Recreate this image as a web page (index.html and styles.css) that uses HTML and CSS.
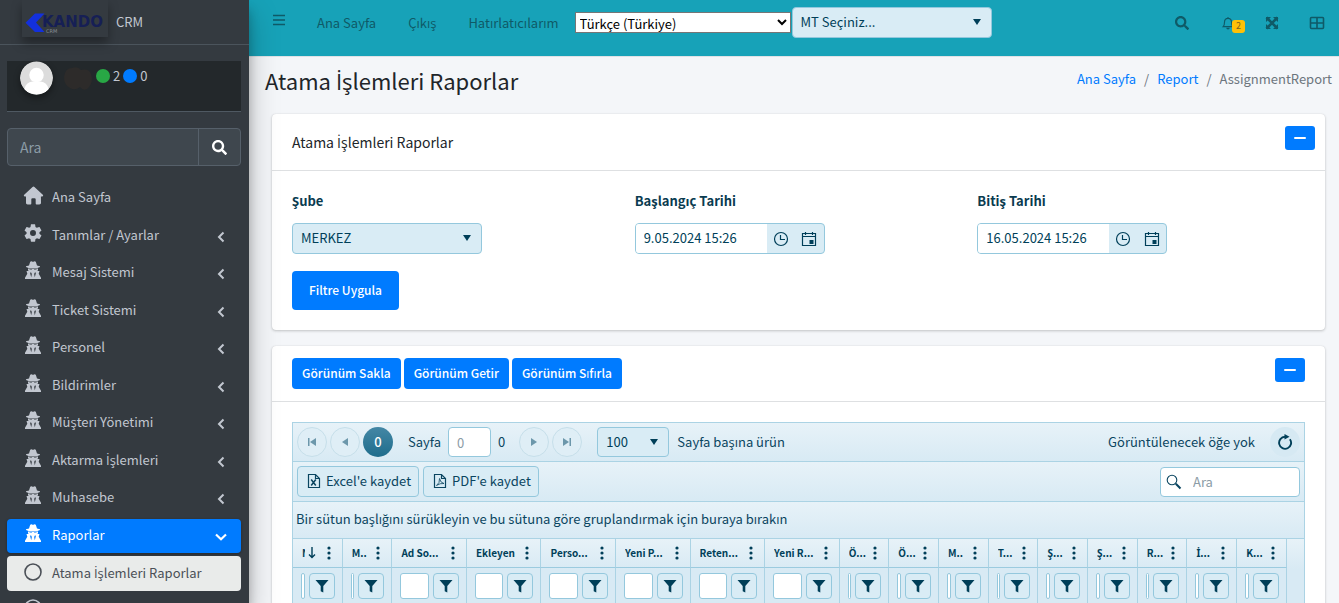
FILE: index.html
```html
<!DOCTYPE html>
<html lang="tr">
<head>
<meta charset="utf-8">
<title>Atama İşlemleri Raporlar</title>
<link rel="stylesheet" href="styles.css">
</head>
<body>
<svg class="sprite" aria-hidden="true">
  <symbol id="i-secret" viewBox="0 0 16 18"><path fill-rule="evenodd" d="M4 4.500L5.200.8Q6.500-.3 8 1 9.500-.3 10.800.8L12 4.500l3 .8v.7l-2.500 1h-9L1 6v-.700zM3 7.600h10V9l-.6 1h2.100l-.8 2.800 2.300 4V18H0v-1.200l2.300-4-.8-2.800h2.100L3 9zM4.500 8.200v.6h2.500v-.6zM9 8.200v.6h2.500v-.6zM5 11.500l1.200 4.700.6-3-.4-1.400zM11 11.500l-1.400.3-.4 1.400.6 3z"/></symbol>
  <symbol id="i-search" viewBox="0 0 512 512"><path d="M505 442.7L405.3 343c-4.5-4.5-10.6-7-17-7H372c27.6-35.3 44-79.7 44-128C416 93.1 322.9 0 208 0S0 93.1 0 208s93.1 208 208 208c48.3 0 92.7-16.4 128-44v16.3c0 6.4 2.5 12.5 7 17l99.7 99.7c9.4 9.4 24.6 9.4 33.9 0l28.3-28.3c9.4-9.4 9.4-24.6.1-34zM208 336c-70.7 0-128-57.2-128-128 0-70.7 57.2-128 128-128 70.7 0 128 57.2 128 128 0 70.7-57.2 128-128 128z"/></symbol>
  <symbol id="i-home" viewBox="0 0 22 20"><path d="M11 .6a1.400 1.400 0 0 1 1 .4l8.800 8.200c.7.7.4 1.800-.7 1.800h-1.300l.1 6.600c0 1.100-.7 1.800-1.800 1.800h-2.900a.9.9 0 0 1-.9-.9V14a1.200 1.200 0 0 0-1.200-1.200H9.900A1.200 1.200 0 0 0 8.700 14v4.500a.9.9 0 0 1-.9.9H4.900c-1.100 0-1.800-.7-1.800-1.800V11H1.900C.8 11 .5 9.900 1.200 9.200L10 1a1.400 1.400 0 0 1 1-.4z"/></symbol>
  <symbol id="i-cog" viewBox="2 2 20 20"><path d="M19.140 12.940c.04-.3.06-.61.06-.94 0-.32-.02-.64-.07-.94l2.030-1.580c.18-.14.23-.41.12-.61l-1.920-3.320c-.12-.22-.37-.29-.59-.22l-2.390.96c-.5-.38-1.030-.7-1.620-.94l-.36-2.540c-.04-.24-.24-.41-.48-.41h-3.840c-.24 0-.43.17-.47.41l-.36 2.540c-.59.24-1.130.57-1.620.94l-2.390-.96c-.22-.08-.47 0-.59.22L2.740 8.870c-.12.21-.08.47.12.61l2.030 1.580c-.05.3-.09.63-.09.94s.02.64.07.94l-2.030 1.580c-.18.14-.23.41-.12.61l1.920 3.320c.12.22.37.29.59.22l2.390-.96c.5.38 1.030.7 1.620.94l.36 2.540c.05.24.24.41.48.41h3.840c.24 0 .44-.17.47-.41l.36-2.540c.59-.24 1.130-.56 1.620-.94l2.390.96c.22.08.47 0 .59-.22l1.920-3.320c.12-.22.07-.47-.12-.61l-2.010-1.580zM12 15.300a3.300 3.300 0 1 1 0-6.600 3.300 3.300 0 0 1 0 6.600z"/></symbol>
  <symbol id="i-left" viewBox="0 0 8 12"><path d="M6.500 1.500L2 6l4.500 4.500" fill="none" stroke="currentColor" stroke-width="2"/></symbol>
  <symbol id="i-down" viewBox="0 0 12 8"><path d="M1 1.500l5 4.700 5-4.700" fill="none" stroke="currentColor" stroke-width="2.200"/></symbol>
  <symbol id="i-circle" viewBox="0 0 18 18"><circle cx="9" cy="9" r="8" fill="none" stroke="currentColor" stroke-width="1.600"/></symbol>
  <symbol id="i-caret" viewBox="0 0 8 6"><path d="M0 0h8L4 6z"/></symbol>
  <symbol id="i-clock" viewBox="0 0 16 16"><g fill="none" stroke="currentColor"><circle cx="8" cy="8" r="6.500" stroke-width="1.200"/><path d="M7.500 4v4.500H12" stroke-width="1.200"/></g></symbol>
  <symbol id="i-cal" viewBox="0 0 16 16"><path d="M1.500 2.500h13v12h-13zM1.500 5.500h13M4.500 1v3M11.500 1v3" fill="none" stroke="currentColor" stroke-width="1.200"/><path d="M8.500 9h4v4h-4z"/></symbol>
  <symbol id="i-dots" viewBox="0 0 4 14"><circle cx="2" cy="2" r="1.600"/><circle cx="2" cy="7" r="1.600"/><circle cx="2" cy="12" r="1.600"/></symbol>
  <symbol id="i-filter" viewBox="0 0 14 14"><path d="M.5 1h13L8.300 7v6.500l-2.600-1.300V7z"/></symbol>
  <symbol id="i-tri" viewBox="0 0 8 8"><path d="M1 0l6 4-6 4z"/></symbol>
  <symbol id="i-last" viewBox="0 0 8 8"><path d="M0 0l6 4-6 4zM6.500 0H8v8H6.500z"/></symbol>
</svg>

<div class="app">
  <aside class="sidebar">
    <a class="brand" href="#">
      <svg class="logo" viewBox="0 0 86 37" role="img" aria-label="Kando CRM">
        <path d="M13 13.500h9.500l-8.500 9 8.500 9.500H13L3.500 22.700z" fill="#1330dc"/>
        <text x="20" y="27" class="logo-name">KANDO</text>
        <text x="24" y="33" class="logo-sub">CRM</text>
      </svg>
      <span>CRM</span>
    </a>
    <div class="user">
      <svg class="avatar" viewBox="0 0 34 34"><circle cx="17" cy="17" r="17" fill="#dcdcdc"/><circle cx="17" cy="14" r="7.500" fill="#fff"/><path d="M4.500 28.500Q6 21 13 20.500h8Q28 21 29.500 28.500A17 17 0 0 1 4.500 28.500z" fill="#fff"/></svg>
      <svg class="smudge" viewBox="0 0 30 24"><path d="M1 11Q2 2 9 2q6-2 9 2 8-2 10 4 3 9-4 15-4 2-7-2-5 4-10 1Q1 19 1 11z" fill="#2d2b2a"/></svg>
      <span class="dot dot-green"></span><span>2</span>
      <span class="dot dot-blue"></span><span>0</span>
    </div>
    <form class="side-search">
      <input type="search" placeholder="Ara" aria-label="Menüde ara">
      <button type="button" aria-label="Ara"><svg><use href="#i-search"/></svg></button>
    </form>
    <ul class="menu">
      <li><a href="#"><svg class="wide"><use href="#i-home"/></svg><span>Ana Sayfa</span></a></li>
      <li><a href="#"><svg><use href="#i-cog"/></svg><span>Tanımlar / Ayarlar</span><svg class="arrow"><use href="#i-left"/></svg></a></li>
      <li><a href="#"><svg><use href="#i-secret"/></svg><span>Mesaj Sistemi</span><svg class="arrow"><use href="#i-left"/></svg></a></li>
      <li><a href="#"><svg><use href="#i-secret"/></svg><span>Ticket Sistemi</span><svg class="arrow"><use href="#i-left"/></svg></a></li>
      <li><a href="#"><svg><use href="#i-secret"/></svg><span>Personel</span><svg class="arrow"><use href="#i-left"/></svg></a></li>
      <li><a href="#"><svg><use href="#i-secret"/></svg><span>Bildirimler</span><svg class="arrow"><use href="#i-left"/></svg></a></li>
      <li><a href="#"><svg><use href="#i-secret"/></svg><span>Müşteri Yönetimi</span><svg class="arrow"><use href="#i-left"/></svg></a></li>
      <li><a href="#"><svg><use href="#i-secret"/></svg><span>Aktarma <b class="tr">İ</b>şlemleri</span><svg class="arrow"><use href="#i-left"/></svg></a></li>
      <li><a href="#"><svg><use href="#i-secret"/></svg><span>Muhasebe</span><svg class="arrow"><use href="#i-left"/></svg></a></li>
      <li><a class="active" href="#"><svg><use href="#i-secret"/></svg><span>Raporlar</span><svg class="arrow"><use href="#i-down"/></svg></a>
        <ul class="submenu">
          <li><a class="current" href="#"><svg><use href="#i-circle"/></svg><span>Atama <b class="tr">İ</b>şlemleri Raporlar</span></a></li>
          <li><a href="#" aria-label="Rapor"><svg><use href="#i-circle"/></svg></a></li>
        </ul>
      </li>
    </ul>
  </aside>

  <div class="main">
    <header class="navbar">
      <button class="burger" type="button" aria-label="Menü"><svg viewBox="0 0 12 12"><path d="M0 1.500h12M0 6h12M0 10.500h12" stroke="currentColor" stroke-width="1.500"/></svg></button>
      <nav class="links"><a href="#">Ana Sayfa</a><a href="#">Çıkış</a><a href="#">Hatırlatıcılarım</a></nav>
      <select class="lang" aria-label="Dil"><option>Türkçe (Türkiye)</option></select>
      <div class="drop drop-mt"><select aria-label="MT"><option>MT Seçiniz...</option></select><svg><use href="#i-caret"/></svg></div>
      <div class="tools">
        <button type="button" aria-label="Ara"><svg><use href="#i-search"/></svg></button>
        <button type="button" aria-label="Bildirimler" class="bell"><svg viewBox="0 0 14 16"><path d="M7 1v1.500M1.500 12.200c1.400-1.500 1.500-2.700 1.500-5C3 4.500 4.800 2.700 7 2.700s4 1.800 4 4.500c0 2.300.1 3.500 1.500 5z" fill="none" stroke="currentColor" stroke-width="1.300"/><path d="M5 13.500h4a2 2 0 0 1-4 0z"/></svg><span class="badge">2</span></button>
        <button type="button" aria-label="Tam ekran"><svg viewBox="0 0 14 14"><path d="M1.500 1.500l11 11M12.500 1.500l-11 11" stroke="currentColor" stroke-width="2.600"/><path d="M1 1h5L1 6zM13 1v5L8 1zM1 13V8l5 5zM13 13H8l5-5z"/></svg></button>
        <button type="button" aria-label="Paneller"><svg viewBox="0 0 16 14"><path d="M2.500 1.500h11q1 0 1 1v9q0 1-1 1h-11q-1 0-1-1v-9q0-1 1-1zM8 1.500v11M1.500 7h13" fill="none" stroke="currentColor" stroke-width="1.600"/></svg></button>
      </div>
    </header>

    <div class="page-head">
      <h1>Atama <b class="tr">İ</b>şlemleri Raporlar</h1>
      <ol class="crumbs"><li><a href="#">Ana Sayfa</a></li><li><a href="#">Report</a></li><li>AssignmentReport</li></ol>
    </div>

    <main class="content">
      <section class="card">
        <div class="card-head">
          <h2>Atama <b class="tr">İ</b>şlemleri Raporlar</h2>
          <button class="collapse" type="button" aria-label="Daralt"></button>
        </div>
        <form class="filters">
          <div class="field">
            <label for="branch"><b class="tr tr-bold">Ş</b>ube</label>
            <div class="drop"><select id="branch"><option>MERKEZ</option></select><svg><use href="#i-caret"/></svg></div>
          </div>
          <div class="field">
            <label for="start">Başlangıç Tarihi</label>
            <div class="date"><input id="start" type="text" value="9.05.2024 15:26"><button type="button" aria-label="Saat"><svg><use href="#i-clock"/></svg></button><button type="button" aria-label="Takvim"><svg><use href="#i-cal"/></svg></button></div>
          </div>
          <div class="field">
            <label for="end">Bitiş Tarihi</label>
            <div class="date"><input id="end" type="text" value="16.05.2024 15:26"><button type="button" aria-label="Saat"><svg><use href="#i-clock"/></svg></button><button type="button" aria-label="Takvim"><svg><use href="#i-cal"/></svg></button></div>
          </div>
          <button class="btn apply" type="button">Filtre Uygula</button>
        </form>
      </section>

      <section class="card">
        <div class="card-head card-head-grid">
          <div class="views"><button class="btn" type="button">Görünüm Sakla</button><button class="btn" type="button">Görünüm Getir</button><button class="btn" type="button">Görünüm Sıfırla</button></div>
          <button class="collapse" type="button" aria-label="Daralt"></button>
        </div>
        <div class="grid-wrap">
          <div class="grid">
            <div class="bar pager">
              <div class="pages">
                <button type="button" class="round off" aria-label="İlk"><svg class="flip"><use href="#i-last"/></svg></button>
                <button type="button" class="round off" aria-label="Önceki"><svg class="flip"><use href="#i-tri"/></svg></button>
                <button type="button" class="round on">0</button>
              </div>
              <label class="page-no">Sayfa <input type="text" placeholder="0"> 0</label>
              <div class="pages">
                <button type="button" class="round off" aria-label="Sonraki"><svg><use href="#i-tri"/></svg></button>
                <button type="button" class="round off" aria-label="Son"><svg><use href="#i-last"/></svg></button>
              </div>
              <div class="drop drop-size"><select id="size"><option>100</option></select><svg><use href="#i-caret"/></svg></div>
              <label for="size">Sayfa başına ürün</label>
              <span class="info">Görüntülenecek öğe yok</span>
              <button type="button" class="round refresh" aria-label="Yenile"><svg viewBox="0 0 16 16"><path d="M12.900 5.200A6 6 0 1 1 8 2.800" fill="none" stroke="currentColor" stroke-width="1.900"/><path d="M7.500 0l5 2.800-5 2.700z"/></svg></button>
            </div>
            <div class="bar toolbar">
              <button type="button" class="export"><svg viewBox="0 0 14 16"><path d="M1.500 1.500h7l4 4v9h-11zM8.500 1.500v4h4" fill="none" stroke="currentColor" stroke-width="1.200"/><path d="M4.200 6.500l4.600 6M8.800 6.500l-4.600 6" stroke="currentColor" stroke-width="1.500"/></svg>Excel'e kaydet</button>
              <button type="button" class="export"><svg viewBox="0 0 14 16"><path d="M1.500 1.500h7l4 4v9h-11zM8.500 1.500v4h4" fill="none" stroke="currentColor" stroke-width="1.200"/><path d="M3.500 12.500Q7 10 6.500 5.500 7.500 10 11 10.500 7 10 3.500 12.500z" fill="none" stroke="currentColor" stroke-width=".8"/></svg>PDF'e kaydet</button>
              <div class="grid-search"><svg viewBox="0 0 16 16"><circle cx="6" cy="6" r="4.800" fill="none" stroke="currentColor" stroke-width="1.100"/><path d="M9.800 9.800l4.700 4.700" stroke="currentColor" stroke-width="2"/></svg><input type="search" placeholder="Ara" aria-label="Tabloda ara"></div>
            </div>
            <div class="bar group">Bir sütun başlığını sürükleyin ve bu sütuna göre gruplandırmak için buraya bırakın</div>
            <div class="table-wrap">
              <table>
                <colgroup><col class="s" span="2"><col class="l" span="6"><col class="s" span="9"></colgroup>
                <thead>
                  <tr>
                    <th><div class="th"><span class="clip">N</span><svg class="sort" viewBox="0 0 8 12"><path d="M4 0v10M1 7.500l3 3 3-3" fill="none" stroke="currentColor" stroke-width="1.400"/></svg><svg><use href="#i-dots"/></svg></div></th>
                    <th><div class="th"><span>M..</span><svg><use href="#i-dots"/></svg></div></th>
                    <th><div class="th"><span>Ad So...</span><svg><use href="#i-dots"/></svg></div></th>
                    <th><div class="th"><span>Ekleyen</span><svg><use href="#i-dots"/></svg></div></th>
                    <th><div class="th"><span>Perso...</span><svg><use href="#i-dots"/></svg></div></th>
                    <th><div class="th"><span>Yeni P...</span><svg><use href="#i-dots"/></svg></div></th>
                    <th><div class="th"><span>Reten...</span><svg><use href="#i-dots"/></svg></div></th>
                    <th><div class="th"><span>Yeni R...</span><svg><use href="#i-dots"/></svg></div></th>
                    <th><div class="th"><span>Ö...</span><svg><use href="#i-dots"/></svg></div></th>
                    <th><div class="th"><span>Ö...</span><svg><use href="#i-dots"/></svg></div></th>
                    <th><div class="th"><span>M..</span><svg><use href="#i-dots"/></svg></div></th>
                    <th><div class="th"><span>T...</span><svg><use href="#i-dots"/></svg></div></th>
                    <th><div class="th"><span><b class="tr tr-bold">Ş</b>...</span><svg><use href="#i-dots"/></svg></div></th>
                    <th><div class="th"><span><b class="tr tr-bold">Ş</b>...</span><svg><use href="#i-dots"/></svg></div></th>
                    <th><div class="th"><span>R...</span><svg><use href="#i-dots"/></svg></div></th>
                    <th><div class="th"><span><b class="tr tr-bold">İ</b>...</span><svg><use href="#i-dots"/></svg></div></th>
                    <th><div class="th"><span>K...</span><svg><use href="#i-dots"/></svg></div></th>
                  </tr>
                </thead>
                <tbody>
                  <tr>
                    <td><div class="fl"><input aria-label="Filtre"><button type="button" aria-label="Filtrele"><svg><use href="#i-filter"/></svg></button></div></td>
                    <td><div class="fl"><input aria-label="Filtre"><button type="button" aria-label="Filtrele"><svg><use href="#i-filter"/></svg></button></div></td>
                    <td><div class="fl"><input aria-label="Filtre"><button type="button" aria-label="Filtrele"><svg><use href="#i-filter"/></svg></button></div></td>
                    <td><div class="fl"><input aria-label="Filtre"><button type="button" aria-label="Filtrele"><svg><use href="#i-filter"/></svg></button></div></td>
                    <td><div class="fl"><input aria-label="Filtre"><button type="button" aria-label="Filtrele"><svg><use href="#i-filter"/></svg></button></div></td>
                    <td><div class="fl"><input aria-label="Filtre"><button type="button" aria-label="Filtrele"><svg><use href="#i-filter"/></svg></button></div></td>
                    <td><div class="fl"><input aria-label="Filtre"><button type="button" aria-label="Filtrele"><svg><use href="#i-filter"/></svg></button></div></td>
                    <td><div class="fl"><input aria-label="Filtre"><button type="button" aria-label="Filtrele"><svg><use href="#i-filter"/></svg></button></div></td>
                    <td><div class="fl"><input aria-label="Filtre"><button type="button" aria-label="Filtrele"><svg><use href="#i-filter"/></svg></button></div></td>
                    <td><div class="fl"><input aria-label="Filtre"><button type="button" aria-label="Filtrele"><svg><use href="#i-filter"/></svg></button></div></td>
                    <td><div class="fl"><input aria-label="Filtre"><button type="button" aria-label="Filtrele"><svg><use href="#i-filter"/></svg></button></div></td>
                    <td><div class="fl"><input aria-label="Filtre"><button type="button" aria-label="Filtrele"><svg><use href="#i-filter"/></svg></button></div></td>
                    <td><div class="fl"><input aria-label="Filtre"><button type="button" aria-label="Filtrele"><svg><use href="#i-filter"/></svg></button></div></td>
                    <td><div class="fl"><input aria-label="Filtre"><button type="button" aria-label="Filtrele"><svg><use href="#i-filter"/></svg></button></div></td>
                    <td><div class="fl"><input aria-label="Filtre"><button type="button" aria-label="Filtrele"><svg><use href="#i-filter"/></svg></button></div></td>
                    <td><div class="fl"><input aria-label="Filtre"><button type="button" aria-label="Filtrele"><svg><use href="#i-filter"/></svg></button></div></td>
                    <td><div class="fl"><input aria-label="Filtre"><button type="button" aria-label="Filtrele"><svg><use href="#i-filter"/></svg></button></div></td>
                  </tr>
                </tbody>
              </table>
            </div>
          </div>
        </div>
      </section>
    </main>
  </div>
</div>
</body>
</html>
```
FILE: styles.css
```css
* { box-sizing: border-box; }
body {
  margin: 0;
  font-family: "Noto Sans CJK SC", "Open Sans", sans-serif;
  font-size: 13px;
  line-height: 20px;
  color: #212529;
  background: #f4f6f9;
  height: 100vh;
  overflow: hidden;
}
button, input, select { font: inherit; color: inherit; margin: 0; }
button { padding: 0; border: 0; background: none; display: flex; align-items: center; justify-content: center; }
input { min-width: 0; }
input::placeholder { color: #8b9ca6; opacity: 1; }
a { text-decoration: none; color: inherit; }
ul, ol { list-style: none; margin: 0; padding: 0; }
svg { fill: currentColor; flex: none; }
.sprite { position: absolute; width: 0; height: 0; }

.tr { font-family: "Open Sans", sans-serif; font-weight: 400; line-height: 1; }
.tr-bold { font-family: "Noto Sans", sans-serif; font-weight: 700; }

.app { display: flex; height: 100%; }

/* Sidebar */
.sidebar {
  position: relative;
  z-index: 2;
  width: 249px;
  flex: none;
  overflow: hidden;
  background: #343a40;
  color: #c2c7d0;
  box-shadow: 0 14px 28px rgba(0,0,0,.25), 0 10px 10px rgba(0,0,0,.22);
}
.brand { display: flex; align-items: center; gap: 8px; height: 45px; padding: 0 22px 1px; border-bottom: 1px solid #4b545c; }
.logo { width: 86px; height: 37px; margin-bottom: 8px; align-self: flex-start; background: #343a40; box-shadow: 0 6px 10px rgba(0,0,0,.35); }
.logo-name { font: bold 15px "DejaVu Sans", sans-serif; fill: #161f55; }
.logo-sub { font: 5px "DejaVu Sans", sans-serif; fill: #8a8f96; }
.user { display: flex; align-items: center; margin: 16px 8px 0 7px; height: 51px; padding: 0 13px 20px; background: #23282b; border-bottom: 1px solid #4f5962; }
.avatar { width: 33px; height: 34px; align-self: flex-start; border-radius: 50%; box-shadow: 0 3px 6px rgba(0,0,0,.4); }
.smudge { width: 30px; height: 24px; margin: 4px 3px 0 10px; }
.dot { width: 14px; height: 14px; border-radius: 50%; margin-right: 3px; }
.dot-green { background: #28a745; }
.dot-blue { background: #007bff; margin-left: 3px; }
.side-search { display: flex; height: 38px; margin: 16px 8px 15px 7px; border: 1px solid #56606a; border-radius: 4px; background: #3f474e; }
.side-search input { flex: 1; border: 0; background: none; padding: 0 12px; font-size: 14px; outline: 0; }
.side-search button { width: 42px; border-left: 1px solid #56606a; color: #fff; }
.side-search svg { width: 15px; height: 15px; }
.menu { padding: 0 8px 0 7px; }
.menu a { display: flex; align-items: center; height: 34px; padding: 0 14px 3px 16px; border-radius: 4px; }
.menu > li { margin-bottom: 3px; }
.menu > li:nth-child(odd) { margin-bottom: 4px; }
.menu svg { width: 20px; height: 18px; margin: 0 9px 3px 0; }
.menu svg.wide { width: 21px; height: 19px; margin-right: 8px; }
.menu a > span { flex: 1; white-space: nowrap; }
.menu svg.arrow { width: 12px; height: 12px; margin: 4px 0 0; }
.menu .active { background: #007bff; color: #fff; box-shadow: 0 1px 3px rgba(0,0,0,.3); }
.submenu { padding-top: 3px; }
.submenu li { margin-bottom: 3px; }
.submenu .current { height: 35px; padding-bottom: 1px; background: #e9ebea; color: #4b5057; }

/* Top bar */
.main { flex: 1; min-width: 0; }
.navbar { display: flex; align-items: flex-start; height: 57px; padding: 7px 14px 0 24px; background: #17a2b8; border-bottom: 1px solid #dee2e6; color: #0f5a67; }
.burger { margin-top: 7px; }
.burger svg { width: 12px; height: 12px; }
.links { display: flex; gap: 32px; margin: 6px 16px 0 32px; }
.lang { width: 216px; height: 21px; margin: 5px 1px 0 0; border: 1px solid #767676; background-color: #fff; color: #000; padding: 0; line-height: 18px; }
.drop { position: relative; width: 190px; height: 31px; color: #003f59; }
.drop select { appearance: none; width: 100%; height: 100%; padding: 0 8px 1px; border: 1px solid #94c8dd; border-radius: 4px; background: #d9ecf5; }
.drop svg { position: absolute; right: 11px; top: 12px; width: 8px; height: 6px; pointer-events: none; }
.drop-mt { width: 200px; }
.tools { display: flex; align-items: center; gap: 18px; margin: 9px 0 0 auto; }
.tools svg { width: 14px; height: 14px; }
.tools button:first-child { margin-right: 14px; }
.tools button:last-child { margin-left: 12px; }
.tools button:last-child svg { width: 16px; }
.bell { position: relative; padding-right: 12px; }
.badge { position: absolute; left: 11px; top: 4px; width: 13px; height: 13px; border-radius: 3px; background: #ffc107; font-size: 9px; line-height: 12px; color: #7a6420; }

.page-head { display: flex; justify-content: space-between; align-items: center; padding: 7px 7px 18px 16px; }
h1 { margin: 0; font-size: 22px; line-height: 32px; font-weight: 400; }
.crumbs { display: flex; padding-bottom: 2px; color: #6c757d; }
.crumbs a { color: #007bff; }
.crumbs li + li::before { content: "/"; padding: 0 8px; }

/* Cards */
.content { padding: 0 14px 0 23px; }
.card { background: #fff; border-radius: 4px; margin-bottom: 16px; box-shadow: 0 0 1px rgba(0,0,0,.13), 0 1px 3px rgba(0,0,0,.2); }
.card-head { display: flex; justify-content: space-between; align-items: flex-start; padding: 12px 10px 0 20px; height: 57px; border-bottom: 1px solid #dee0e2; }
.card-head-grid { height: 56px; padding-right: 20px; }
h2 { margin: 6px 0 0; font-size: 14px; line-height: 20px; font-weight: 400; }
.collapse { width: 30px; height: 24px; border-radius: 3px; background: #007bff; }
.collapse::before { content: ""; width: 12px; height: 2px; border-radius: 1px; background: #fff; }
.filters { display: grid; grid-template-columns: repeat(3, 1fr); column-gap: 15px; padding: 20px; color: #003f59; }
.field label { display: block; margin-bottom: 12px; font-weight: 700; color: #0a3b50; }
.date { display: flex; width: 190px; height: 31px; border: 1px solid #94c8dd; border-radius: 4px; overflow: hidden; background: #d9ecf5; }
.date input { flex: 1; border: 0; padding: 0 8px 1px; background: #fff; outline: 0; }
.date button { width: 28px; }
.date button:last-child { width: 29px; }
.date svg { width: 16px; height: 16px; }
.btn { height: 31px; padding: 0 10px 1px; border-radius: 4px; background: #007bff; color: #fff; font-size: 12px; font-weight: 500; white-space: nowrap; }
.apply { justify-self: start; height: 39px; margin-top: 17px; padding: 0 17px 1px; }
.views { display: flex; gap: 3px; }

/* Data grid */
.grid-wrap { padding: 20px; }
.grid { border: 1px solid #abd3e4; color: #0a4560; }
.bar { display: flex; align-items: center; height: 40px; padding: 0 4px; border-bottom: 1px solid #abd3e4; background: linear-gradient(#e7f2f8, #d8eaf4); }
.pager { height: 39px; }
.pages { display: flex; gap: 3px; }
.round { width: 30px; height: 30px; border-radius: 50%; border: 1px solid #c6dfea; background: #dfeef6; }
.round svg { width: 8px; height: 8px; }
.off { color: #6c97ab; }
.flip { transform: scaleX(-1); }
.on { background: linear-gradient(#4487a5, #1f6d8c); border: 0; color: #fff; font-weight: 500; }
.page-no { display: flex; align-items: center; gap: 7px; margin: 0 14px 0 15px; }
.page-no input { width: 43px; height: 30px; padding: 0 8px; border: 1px solid #94c8dd; border-radius: 4px; background: #fff; }
.drop-size { width: 72px; height: 30px; margin: 0 8px 0 15px; }
.info { margin-left: auto; margin-right: 15px; }
.round.refresh { border: 0; background: #d6e9f3; color: #003f59; }
.round.refresh svg { width: 16px; height: 16px; }
.export { height: 31px; padding: 0 7px 1px 9px; gap: 5px; margin-right: 4px; border: 1px solid #94c8dd; border-radius: 4px; background: #d9ecf5; }
.export svg { width: 14px; height: 16px; }
.grid-search { display: flex; align-items: center; margin-left: auto; width: 140px; height: 30px; padding: 0 5px; border: 1px solid #94c8dd; border-radius: 4px; background: #fff; }
.grid-search svg { width: 16px; height: 16px; }
.grid-search input { flex: 1; border: 0; padding: 0 0 0 11px; background: none; outline: 0; }
.group { height: 37px; padding: 0 3px 2px; }
.table-wrap { padding-right: 17px; background: linear-gradient(#e7f2f8, #d8eaf4 30px); }
table { width: 100%; table-layout: fixed; border-collapse: separate; border-spacing: 0; }
.s { width: 5%; }
.l { width: 7.5%; }
th, td { padding: 0; border-right: 1px solid #abd3e4; border-bottom: 1px solid #9bcbdf; }
th { font-size: 10px; line-height: 20px; color: #003f59; text-align: left; }
.th { display: flex; align-items: center; height: 28px; padding: 0 11px 0 9px; }
.th > span { flex: 1; overflow: hidden; white-space: nowrap; }
.th > .clip { flex: none; width: 3px; }
.th svg { width: 4px; height: 14px; }
.th .sort { width: 8px; height: 12px; margin: 0 auto 0 3px; }
.fl { display: flex; gap: 4px; height: 36px; padding: 5px 7px 5px 8px; }
.fl input { flex: 1; width: 0; height: 26px; padding: 0; border: 1px solid #94c8dd; border-radius: 3px; background: #fff; }
.fl button { flex: none; width: 26px; height: 26px; border: 1px solid #94c8dd; border-radius: 4px; background: #d9ecf5; color: #003f59; }
.fl svg { width: 14px; height: 14px; }
```
